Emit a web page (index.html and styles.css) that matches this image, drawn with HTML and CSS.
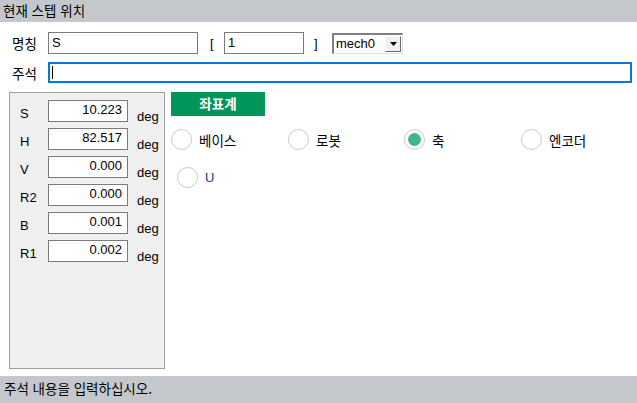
FILE: index.html
```html
<!DOCTYPE html>
<html lang="ko">
<head>
<meta charset="utf-8">
<link rel="stylesheet" href="styles.css">
</head>
<body>
<div class="page">
  <div class="titlebar">현재 스텝 위치</div>
  <div class="form">
    <div class="row row1">
      <span class="lbl">명칭</span>
      <div class="field name">S</div>
      <span class="br open">[</span>
      <div class="field idx">1</div>
      <span class="br close">]</span>
      <div class="select"><span class="sel-text">mech0</span><span class="sel-btn"><svg width="7" height="4" viewBox="0 0 7 4"><path d="M0 0H7L3.5 4Z" fill="#000"/></svg></span></div>
    </div>
    <div class="row row2">
      <span class="lbl">주석</span>
      <div class="field comment"><span class="caret"></span></div>
    </div>
  </div>
  <div class="main">
    <div class="panel">
      <div class="prow"><span class="plbl">S</span><div class="pval">10.223</div><span class="unit">deg</span></div>
      <div class="prow"><span class="plbl">H</span><div class="pval">82.517</div><span class="unit">deg</span></div>
      <div class="prow"><span class="plbl">V</span><div class="pval">0.000</div><span class="unit">deg</span></div>
      <div class="prow"><span class="plbl">R2</span><div class="pval">0.000</div><span class="unit">deg</span></div>
      <div class="prow"><span class="plbl">B</span><div class="pval">0.001</div><span class="unit">deg</span></div>
      <div class="prow"><span class="plbl">R1</span><div class="pval">0.002</div><span class="unit">deg</span></div>
    </div>
    <div class="coords">
      <div class="coord-btn">좌표계</div>
      <div class="radios">
        <div class="radio"><span class="circle"></span><span class="rlbl">베이스</span></div>
        <div class="radio"><span class="circle"></span><span class="rlbl">로봇</span></div>
        <div class="radio"><span class="circle on"></span><span class="rlbl">축</span></div>
        <div class="radio"><span class="circle"></span><span class="rlbl">엔코더</span></div>
      </div>
      <div class="radios2">
        <div class="radio"><span class="circle"></span><span class="rlbl ulbl">U</span></div>
      </div>
    </div>
  </div>
  <div class="statusbar">주석 내용을 입력하십시오.</div>
</div>
</body>
</html>
```

FILE: styles.css
```css
* { box-sizing: border-box; }
html, body { margin: 0; padding: 0; }
body {
  width: 637px;
  height: 403px;
  overflow: hidden;
  background: #fff;
  font-family: "Noto Sans CJK KR", "Liberation Sans", sans-serif;
  font-size: 13px;
  color: #000;
}
.page {
  display: flex;
  flex-direction: column;
  height: 403px;
}
.titlebar {
  height: 22px;
  background: #c4c8cc;
  padding-left: 3px;
  line-height: 21px;
  font-size: 13.5px;
}
.form {
  padding-top: 10px;
}
.row {
  display: flex;
  align-items: center;
}
.lbl {
  width: 48px;
  padding-left: 12px;
  font-size: 13.5px;
}
.field {
  border: 1px solid #7a7a7a;
  background: #fff;
  height: 22px;
  line-height: 20px;
  padding-left: 3px;
  font-family: "Liberation Sans", sans-serif;
  font-size: 13px;
}
.name { width: 150px; }
.br { font-family: "Liberation Sans", sans-serif; font-size: 13px; }
.open { margin-left: 12px; width: 14px; }
.idx { width: 80px; }
.close { margin-left: 10px; width: 18px; }
.select {
  width: 71px;
  height: 21px;
  display: flex;
  align-items: center;
  border-top: 2px solid #808080;
  border-left: 2px solid #808080;
  border-right: 1px solid #e0e0e0;
  border-bottom: 1px solid #e0e0e0;
  background: #fff;
  font-family: "Liberation Sans", sans-serif;
  font-size: 13px;
}
.sel-text { padding-left: 2px; flex: 1; }
.sel-btn {
  width: 16px;
  height: 16px;
  margin-right: 1px;
  background: #f0f0f0;
  border-top: 1px solid #fff;
  border-left: 1px solid #fff;
  border-right: 1px solid #6a6a6a;
  border-bottom: 1px solid #6a6a6a;
  display: flex;
  align-items: center;
  justify-content: center;
}
.row2 { margin-top: 8px; }
.comment {
  width: 584px;
  height: 21px;
  border: 2px solid #0a78d4;
  display: flex;
  align-items: center;
  padding-left: 2px;
}
.caret {
  width: 1px;
  height: 13px;
  background: #000;
}
.main {
  display: flex;
  margin-top: 9px;
  flex: 1;
}
.panel {
  flex-shrink: 0;
  margin-left: 9px;
  width: 156px;
  height: 277px;
  background: #f0f0f0;
  border: 1px solid #a0a0a0;
  padding-top: 7px;
  display: flex;
  flex-direction: column;
  gap: 6px;
}
.prow {
  display: flex;
  align-items: center;
  height: 22px;
  font-family: "Liberation Sans", sans-serif;
  font-size: 13px;
}
.plbl { width: 38px; padding-left: 10px; padding-top: 5px; }
.pval {
  width: 80px;
  height: 22px;
  background: #fff;
  border: 1px solid #7a7a7a;
  text-align: right;
  padding-right: 5px;
  line-height: 17px;
}
.unit { margin-left: 9px; padding-top: 10px; }
.coords {
  margin-left: 6px;
  display: flex;
  flex-direction: column;
}
.coord-btn {
  width: 94px;
  height: 24px;
  background: #00965a;
  color: #fff;
  font-weight: bold;
  font-size: 13.5px;
  text-align: center;
  line-height: 23px;
}
.radios {
  display: grid;
  grid-template-columns: 117px 116px 117px 116px;
  margin-top: 13px;
}
.radios2 {
  margin-top: 17px;
  margin-left: 6px;
}
.radio {
  display: flex;
  align-items: center;
  height: 21px;
}
.circle {
  width: 21px;
  height: 21px;
  border-radius: 50%;
  border: 1px solid #c8c8c8;
  background: #fff;
  display: flex;
  align-items: center;
  justify-content: center;
}
.circle.on::after {
  content: "";
  width: 13px;
  height: 13px;
  border-radius: 50%;
  background: #3fb889;
}
.rlbl { margin-left: 7px; font-size: 13.5px; }
.ulbl { font-family: "Liberation Sans", sans-serif; font-size: 13px; color: #3a1f8a; }
.statusbar {
  height: 27px;
  background: #c4c8cc;
  padding-left: 4px;
  line-height: 25px;
  font-size: 13.5px;
}
```
